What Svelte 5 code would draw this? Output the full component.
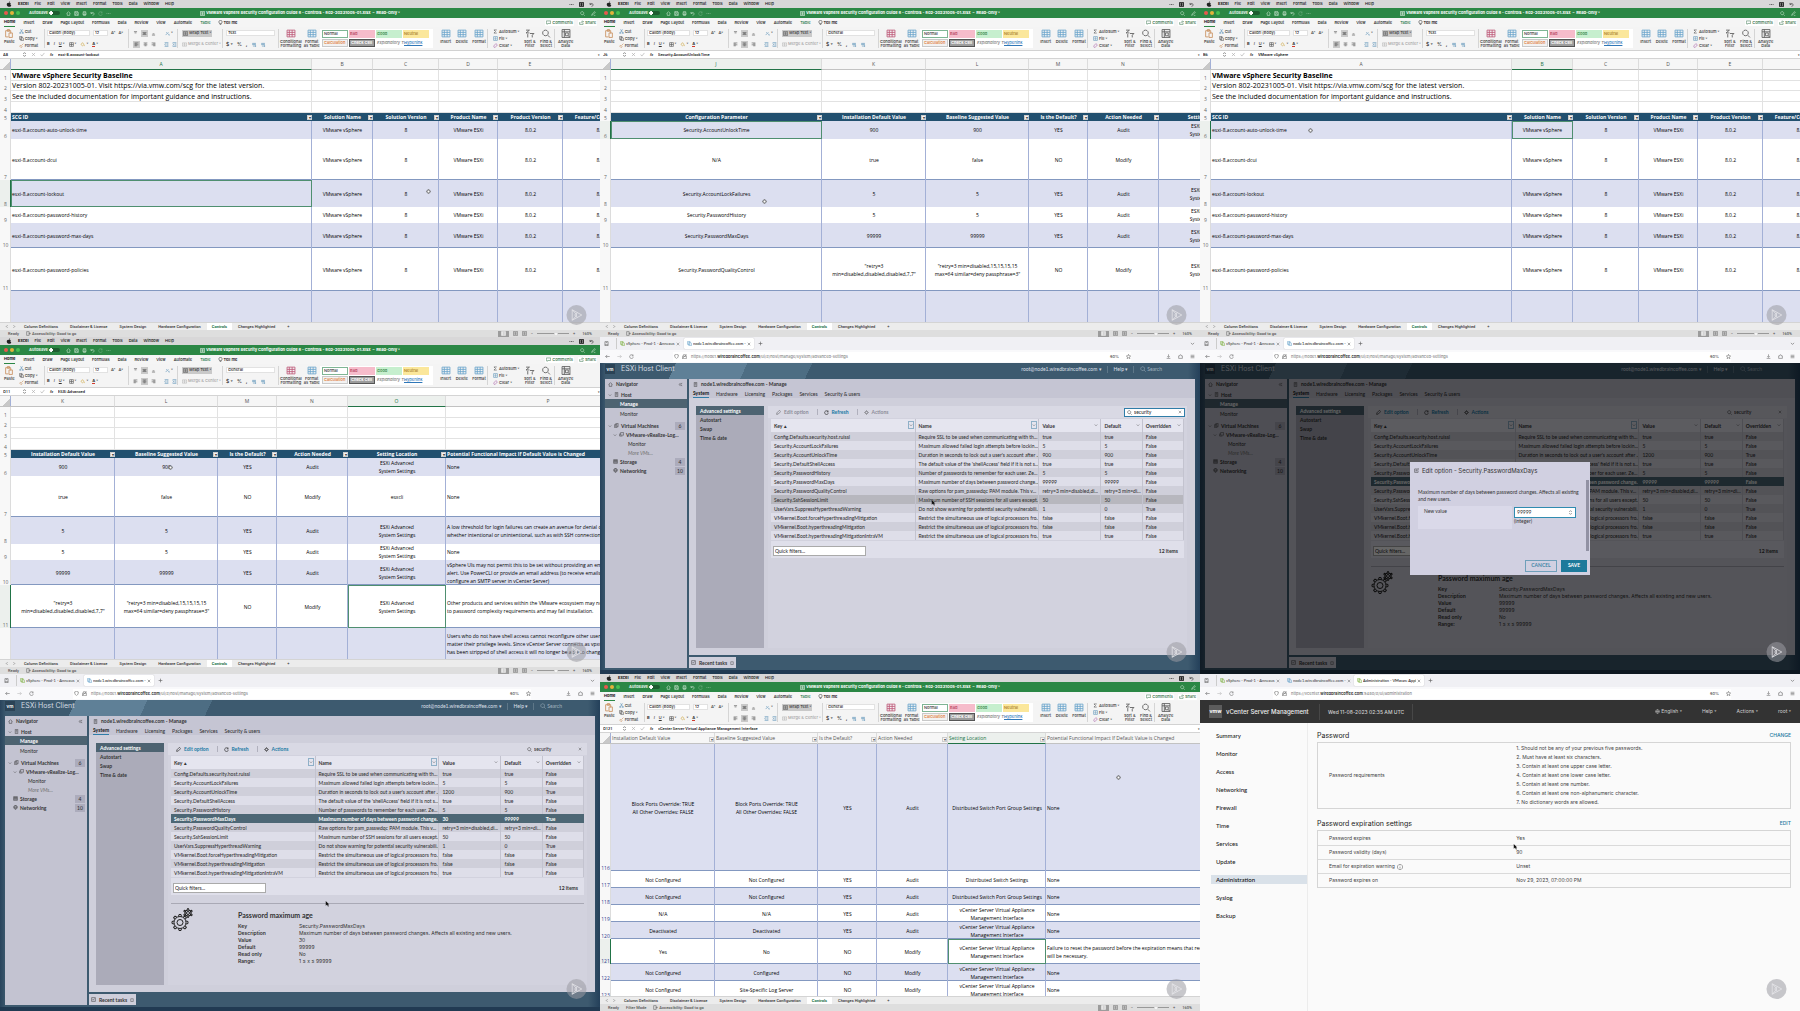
<script>
  const P = {
    home: 'M2 8l6-6 6 6M4 7v7h8V7',
    save: 'M2 2h10l2 2v10H2zM5 2v4h6V2M5 14V9h6v5',
    print: 'M4 6V2h8v4M3 6h10v6H3zM5 10h6v4H5z',
    undo: 'M3 3v5h5M3 8c3-5 10-4 10 1 0 3-2 5-5 5',
    redo: 'M13 5A6 6 0 1 0 14 9M13 2v4H9',
    dots: 'M2 8h2M7 8h2M12 8h2',
    search: 'M7 2a5 5 0 1 0 .1 0M11 11l4 4',
    pen: 'M2 14l2-5 8-7 2 2-8 8zM9 14h5',
    bulb: 'M8 1a5 5 0 0 0-3 9v2h6v-2a5 5 0 0 0-3-9M6 15h4',
    comment: 'M1 3h14v8H7l-3 3v-3H1z',
    share: 'M2 7v7h11V9M6 10c0-4 3-5 8-5M11 2l3 3-3 3',
    scissors: 'M5 1l6 10M11 1L5 11M4 11a2 2 0 1 0 .1 0M12 11a2 2 0 1 0 .1 0',
    copy: 'M2 1h7v10H2zM6 4h5l3 3v8H6z',
    brush: 'M2 10l5 5 3-3-5-5zM8 8l6-6',
    paste: 'M2 3h9v5M2 3v11h5M5 1h4v3H5zM8 7h6v8H8z',
    borders: 'M2 2h12v12H2zM8 2v12M2 8h12',
    bucket: 'M3 8l5-6 5 6-5 4zM14 10v3',
    top: 'M3 2h10M5 6h6',
    mid: 'M2 5h12M4 8h8M2 11h12',
    bottom: 'M5 9h6M3 13h10',
    left: 'M2 3h12M2 6h7M2 9h12M2 12h7',
    center: 'M2 3h12M5 6h6M2 9h12M5 12h6',
    right: 'M2 3h12M7 6h7M2 9h12M7 12h7',
    rotate: 'M2 13L11 4M4 4l4 4M12 9v4h3',
    indentL: 'M2 2h12M8 6h6M8 10h6M2 14h12M6 5L2 8l4 3',
    indentR: 'M2 2h12M8 6h6M8 10h6M2 14h12M2 5l4 3-4 3',
    merge: 'M1 3h14v10H1zM5 8h6M8 3v3M8 10v3',
    decimals: 'M2 4v5h3V4zM8 4v5h3V4zM3 13h9M10 11l3 2-3 2',
    grid: 'M1 2h14v12H1zM1 6h14M1 10h14M5 2v12M10 2v12',
    sigma: 'M12 3H3l5 5-5 5h9',
    fill: 'M2 2h12v12H2zM8 4v6M5 8l3 3 3-3',
    eraser: 'M2 10l7-8 5 4-7 8H4z',
    sort: 'M1 2h6L1 7h6M8 8h7l-3 3v4M4 9v6',
    analyze: 'M1 1h14v14H1zM1 5h14M5 1v14M7 7h5v5H7zM12 12l3 3',
    down: 'M3 6l5 5 5-5',
    leftc: 'M10 3L5 8l5 5',
    rightc: 'M6 3l5 5-5 5',
    x: 'M3 3l10 10M13 3L3 13',
    check: 'M2 8l4 5 8-10',
    plus: 'M8 2v12M2 8h12',
    access: 'M2 2h8v12H2zM12 5v6M9 8h6',
    page: 'M2 1h12v14H2zM5 5h6M5 8h6M5 11h6',
    back: 'M15 8H2M7 3L2 8l5 5',
    fwd: 'M1 8h13M9 3l5 5-5 5',
    shield: 'M8 1l6 2c0 6-2 9-6 12C4 12 2 9 2 3z',
    lock: 'M4 7V5a4 4 0 0 1 8 0v2M2 7h12v8H2zM1 14L15 2',
    star: 'M8 1l2 5 5 .5-4 3.500 1.500 5-4.500-3-4.500 3L5 10 1 6.500 6 6z',
    download: 'M8 1v9M4 7l4 4 4-4M2 14h12',
    ext: 'M2 6h3c0-5 6-5 6 0h3v8H2z',
    menu: 'M2 4h12M2 8h12M2 12h12',
    host: 'M4 1h8v14H4zM6 4h4M6 7h4M7 12h2',
    vms: 'M2 5h7v10H2zM6 5V1h7v11H9M4 8h3M4 11h3',
    vm: 'M5 2h10v8H5zM2 5v8h9',
    storage: 'M2 2h12v3H2zM2 6h12v3H2zM2 10h12v4H2z',
    net: 'M8 1a6 6 0 1 0 .1 0M8 1c-4 3-4 9 0 12 4-3 4-9 0-12M3 7h10M8 13v2',
    dbl: 'M8 3L4 8l4 5M13 3L9 8l4 5',
    pencil: 'M2 14l1-5 8-8 4 4-8 8z',
    cog: 'M8 4a4 4 0 1 0 .1 0M8 1v3M8 12v3M1 8h3M12 8h3M3 3l2 2M11 11l2 2M13 3l-2 2M5 11l-2 2',
    edit: 'M9 3H2v11h11V8M6 10l1-3 6-6 2 2-6 6z',
    task: 'M2 2h12v12H2zM5 8l2 2 4-5',
    box: 'M3 3h10v11H3z',
    globe: 'M8 2a6 6 0 1 0 .1 0M2 8h12M8 2c-3 4-3 8 0 12 3-4 3-8 0-12',
    info: 'M8 1a7 7 0 1 0 .1 0M8 7v5M8 4v1',
    tabs: 'M3 2h10v13H3zM6 5h4M3 12h10',
    spin: 'M4 6l4-4 4 4M4 10l4 4 4-4'
  };

  const menus = ['Excel', 'File', 'Edit', 'View', 'Insert', 'Format', 'Tools', 'Data', 'Window', 'Help'];
  const ribbonTabs = ['Home', 'Insert', 'Draw', 'Page Layout', 'Formulas', 'Data', 'Review', 'View', 'Automate', 'Table'];
  const styles = [['Normal', 'normal'], ['Bad', 'bad'], ['Good', 'good'], ['Neutral', 'neutral'], ['Calculation', 'calc'], ['Check Cell', 'chk'], ['Explanatory T...', 'expl'], ['Hyperlink', 'link']];
  const sheets = ['Column Definitions', 'Disclaimer & License', 'System Design', 'Hardware Configuration', 'Controls', 'Changes Highlighted'];

  const heights = [11, 10, 11, 11, 8, 18, 41, 27, 16, 25, 43, 31];
  const lined = [7, 10, 11];
  const shaded = [6, 8, 10, 12];
  const esx = 'ESXi Advanced\nSystem Settings';

  const idNames = ['auto-unlock-time', 'dcui', 'lockout', 'password-history', 'password-max-days', 'password-policies'];
  const idRows = [
    ...[['VMware vSphere Security Baseline'], ['Version 802-20231005-01. Visit https://via.vmw.com/scg for the latest version.'], ['See the included documentation for important guidance and instructions.'], ['']].map((r) => [...r, '', '', '', '', '']),
    ['SCG ID', 'Solution Name', 'Solution Version', 'Product Name', 'Product Version', 'Feature/Component'],
    ...idNames.map((n) => ['esxi-8.account-' + n, 'VMware vSphere', '8', 'VMware ESXi', '8.0.2', '8.0']),
    ['', '', '', '', '', '']
  ];
  const idCols = [{ l: 'A', w: 0, left: true }, { l: 'B', w: 61 }, { l: 'C', w: 66 }, { l: 'D', w: 59 }, { l: 'E', w: 65 }, { l: '', w: 74 }];

  const q1 = '"retry=3\nmin=disabled,disabled,disabled,7,7"';
  const q2 = '"retry=3 min=disabled,15,15,15,15\nmax=64 similar=deny passphrase=3"';
  const valueRows = [
    ['Installation Default Value', 'Baseline Suggested Value', 'Is the Default?', 'Action Needed', 'Setting Location'],
    ['900', '900', 'YES', 'Audit', esx],
    ['true', 'false', 'NO', 'Modify', 'esxcli'],
    ['5', '5', 'YES', 'Audit', esx],
    ['5', '5', 'YES', 'Audit', esx],
    ['99999', '99999', 'YES', 'Audit', esx],
    [q1, q2, 'NO', 'Modify', esx],
    ['', '', '', '', '']
  ];
  const params = ['Configuration Parameter', 'Security.AccountUnlockTime', 'N/A', 'Security.AccountLockFailures', 'Security.PasswordHistory', 'Security.PasswordMaxDays', 'Security.PasswordQualityControl', ''];
  const impact = [
    'Potential Functional Impact If Default Value is Changed', 'None', 'None',
    'A low threshold for login failures can create an avenue for denial of service,\nwhether intentional or unintentional, such as with SSH connections.',
    'None',
    'vSphere UIs may not permit this to be set without providing an email for the\nalert. Use PowerCLI or provide an email address (to receive emails,\nconfigure an SMTP server in vCenter Server)',
    'Other products and services within the VMware ecosystem may not respond\nto password complexity requirements and may fail installation.',
    'Users who do not have shell access cannot reconfigure other users, no\nmatter their privilege levels. Since vCenter Server connects as vpxuser, which\nhas been stripped of shell access it will no longer be able to change that.'
  ];
  const blanks = (n) => Array.from({ length: 4 }, () => Array(n).fill(''));
  const toRows = (data) => data.map((cells, i) => ({ n: i + 1, h: heights[i], cells, line: lined.includes(i + 1), shade: shaded.includes(i + 1), head: i === 4, plain: i < 4, title: i < 3 }));

  const midCols = [{ l: 'K', w: 104 }, { l: 'L', w: 103 }, { l: 'M', w: 59 }, { l: 'N', w: 71 }];
  const vc = 'vCenter Server Virtual Appliance\nManagement Interface';
  const lateData = [
    [116, 127, 'Block Ports Override: TRUE\nAll Other Overrides: FALSE', 'Block Ports Override: TRUE\nAll Other Overrides: FALSE', 'YES', 'Audit', 'Distributed Switch Port Group Settings', 'None'],
    [117, 17, 'Not Configured', 'Not Configured', 'YES', 'Audit', 'Distributed Switch Settings', 'None'],
    [118, 17, 'Not Configured', 'Not Configured', 'YES', 'Audit', 'Distributed Switch Port Group Settings', 'None'],
    [119, 17, 'N/A', 'N/A', 'YES', 'Audit', vc, 'None'],
    [120, 17, 'Deactivated', 'Deactivated', 'YES', 'Audit', vc, 'None'],
    [121, 25, 'Yes', 'No', 'NO', 'Modify', vc, 'Failure to reset the password before the expiration means that recovery\nwill be necessary.'],
    [122, 17, 'Not Configured', 'Configured', 'NO', 'Modify', vc, 'None'],
    [123, 17, 'Not Configured', 'Site-Specific Log Server', 'NO', 'Modify', vc, 'None']
  ];

  const books = {
    a: { id: 'a', ref: 'A8', text: 'esxi-8.account-lockout', fmt: 'Text', cols: idCols, over: 37, rows: toRows(idRows), sel: [8, 0], cur: ['cross', 71, 56] },
    b: { id: 'b', ref: 'J6', text: 'Security.AccountUnlockTime', fmt: 'General', cols: [{ l: 'J', w: 0 }, ...midCols, { l: '', w: 98 }], over: 57, rows: toRows([...blanks(6), ...valueRows.map((r, i) => [params[i], ...r])]), sel: [6, 0], cur: ['cross', 27, 59] },
    c: { id: 'c', ref: 'B6', text: 'VMware vSphere', fmt: 'Text', cols: idCols, over: 37, rows: toRows(idRows), sel: [6, 1], cur: ['cross', 18, 38] },
    d: { id: 'd', ref: 'O11', text: 'ESXi Advanced', fmt: 'General', cols: [...midCols, { l: 'O', w: 98 }, { l: 'P', w: 0, left: true }], over: 51, rows: toRows([...blanks(6), ...valueRows.map((r, i) => [...r, impact[i]])]), sel: [11, 4], cur: ['cross', 28, 38] },
    e: { id: 'e', ref: 'O121', text: 'vCenter Server Virtual Appliance Management Interface', fmt: 'General', filter: true, cols: [...midCols, { l: 'O', w: 98 }, { l: 'P', w: 0, left: true }].map((c, i) => ({ ...c, l: [...valueRows[0], impact[0]][i] })), over: 51, rows: lateData.map(([n, h, ...cells], i) => ({ n, h, cells, line: true, shade: i % 2 === 0 })), sel: [121, 4], cur: ['cross', 86, 30] }
  };

  const optRows = [
    ['Config.Defaults.security.host.ruissl', 'Require SSL to be used when communicating with th...', 'true', 'true', 'False'],
    ['Security.AccountLockFailures', 'Maximum allowed failed login attempts before lockin...', '5', '5', 'False'],
    ['Security.AccountUnlockTime', "Duration in seconds to lock out a user's account after ...", '900', '900', 'False'],
    ['Security.DefaultShellAccess', "The default value of the 'shellAccess' field if it is not s...", 'true', 'true', 'False'],
    ['Security.PasswordHistory', 'Number of passwords to remember for each user. Ze...', '5', '5', 'False'],
    ['Security.PasswordMaxDays', 'Maximum number of days between password change...', '99999', '99999', 'False'],
    ['Security.PasswordQualityControl', 'Raw options for pam_passwdqc PAM module. This v...', 'retry=3 min=disabled,di...', 'retry=3 min=di...', 'False'],
    ['Security.SshSessionLimit', 'Maximum number of SSH sessions for all users except...', '50', '50', 'False'],
    ['UserVars.SuppressHyperthreadWarning', 'Do not show warning for potential security vulnerabili...', '1', '0', 'True'],
    ['VMkernel.Boot.forceHyperthreadingMitigation', 'Restrict the simultaneous use of logical processors fro...', 'false', 'false', 'False'],
    ['VMkernel.Boot.hyperthreadingMitigation', 'Restrict the simultaneous use of logical processors fro...', 'false', 'false', 'False'],
    ['VMkernel.Boot.hyperthreadingMitigationIntraVM', 'Restrict the simultaneous use of logical processors fro...', 'true', 'true', 'False']
  ];
  const unlocked = optRows.map((r, i) => (i === 2 ? [r[0], r[1], '1200', '900', 'True'] : r));
  const saved = unlocked.map((r, i) => (i === 5 ? [r[0], r[1], '30', '99999', 'True'] : r));
  const hosts = {
    f: { id: 'f', rows: optRows, hover: 7, sel: -1, value: '', focus: true, cur: ['arrow', 55, 48] },
    g: { id: 'g', rows: unlocked, hover: -1, sel: 5, value: '99999', modal: true },
    h: { id: 'h', rows: saved, hover: -1, sel: 5, value: '30', cur: ['arrow', 54, 67] }
  };
  const optCols = ['Key ▴', 'Name', 'Value', 'Default', 'Overridden'];
  const facts = (v) => [['Key', 'Security.PasswordMaxDays'], ['Description', 'Maximum number of days between password changes. Affects all existing and new users.'], ['Value', v], ['Default', '99999'], ['Read only', 'No'], ['Range:', '1 ≤ x ≤ 99999']];

  const vcNav = ['Summary', 'Monitor', 'Access', 'Networking', 'Firewall', 'Time', 'Services', 'Update', 'Administration', 'Syslog', 'Backup'];
  const rules = ['Should not be any of your previous five passwords.', 'Must have at least six characters.', 'Contain at least one upper case letter.', 'Contain at least one lower case letter.', 'Contain at least one number.', 'Contain at least one non-alphanumeric character.', 'No dictionary words are allowed.'];
  const expiry = [['Password expires', 'Yes'], ['Password validity (days)', '90'], ['Email for expiration warning', 'Unset'], ['Password expires on', 'Nov 29, 2023, 07:00:00 PM']];
</script>

{#snippet ic(name, cls = '')}
  <svg class="ic {cls}" viewBox="0 0 16 16" aria-hidden="true"><path d={P[name]} /></svg>
{/snippet}

{#snippet watermark()}
  <svg class="mark" viewBox="0 0 22 22" aria-hidden="true">
    <circle cx="11" cy="11" r="10.500" />
    <path d="M6.500 5.500v11L16.500 11zM6.500 5.500l5 5.500-5 5.500M9 11l3-2.500M9 11l3 2.500" />
  </svg>
{/snippet}

{#snippet pointer(c)}
  {#if c}
    <svg class="pointer" class:small={c[0] === 'cross'} style="left:{c[1]}%;top:{c[2]}%" viewBox="0 0 8 8" aria-hidden="true">
      {#if c[0] === 'cross'}
        <path class="cross" d="M3 1h2v2h2v2H5v2H3V5H1V3h2z" />
      {:else}
        <path class="arrow" d="M2 1v5.500L3.500 5l1 2.500 1-.5-1-2H6z" />
      {/if}
    </svg>
  {/if}
{/snippet}

{#snippet excel(b)}
  <section class="tile excel" aria-label="Workbook view {b.ref}">
    <nav class="macbar" aria-label="System menu">
      <svg class="apple" viewBox="0 0 16 16" aria-hidden="true"><path d="M11 1c0 2-1 3-3 3 0-2 1-3 3-3M8 5c2-1 4-1 5 1-2 1-2 4 1 5-1 3-3 5-6 4-3 1-6-3-6-6s3-6 6-4" /></svg>
      {#each menus as m}<button class:strong={m === 'Excel'}>{m}</button>{/each}
      <span class="push">{@render ic('dots', 'heavy')}{@render ic('page', 'heavy')}{@render ic('undo')}</span>
    </nav>
    <header class="titlebar">
      <div class="quick">
        <i class="dot red"></i><i class="dot amber"></i><i class="dot green"></i>
        <label class="auto">AutoSave <input type="checkbox" role="switch" /></label>
        {@render ic('home')}{@render ic('save')}{@render ic('print')}{@render ic('undo')}{@render ic('redo', 'dim')}{@render ic('dots')}
      </div>
      <h2>{@render ic('page', 'white')}VMware vSphere Security Configuration Guide 8 - Controls - 802-20231005-01.xlsx &nbsp;–&nbsp; Read-Only ˅</h2>
      <div class="quick end">{@render ic('search')}{@render ic('pen')}</div>
    </header>
    <nav class="rtabs" aria-label="Ribbon tabs">
      {#each ribbonTabs as t}<button class:on={t === 'Home'} class:ctx={t === 'Table'}>{t}</button>{/each}
      <button class="tell">{@render ic('bulb')}Tell me</button>
      <span class="push"><button class="pill">{@render ic('comment')}Comments</button><button class="pill">{@render ic('share')}Share</button></span>
    </nav>
    <div class="ribbon">
      <div class="grp paste">
        <button class="big">{@render ic('paste', 'lg orange')}<span>Paste</span></button>
        <div class="stack"><button>{@render ic('scissors', 'blue')}Cut</button><button>{@render ic('copy')}Copy ˅</button><button>{@render ic('brush', 'orange')}Format</button></div>
      </div>
      <div class="grp font two">
        <div><select class="fname" aria-label="Font"><option>Calibri (Body)</option></select><select class="fsize" aria-label="Font size"><option>12</option></select><button>A^</button><button>A˅</button></div>
        <div class="wide"><button><b>B</b></button><button><i>I</i></button><button><u>U</u> ˅</button><button>{@render ic('borders')}˅</button><button>{@render ic('bucket', 'gold')}˅</button><button><b class="fc">A</b> ˅</button></div>
      </div>
      <div class="grp align two">
        <div><button>{@render ic('top')}</button><button class="pressed">{@render ic('mid')}</button><button>{@render ic('bottom')}</button><span class="gap"></span><button>{@render ic('rotate', 'blue')}˅</button></div>
        <div><button class:pressed={b.fmt === 'Text'}>{@render ic('left')}</button><button class:pressed={b.fmt !== 'Text'}>{@render ic('center')}</button><button>{@render ic('right')}</button><span class="gap"></span><button>{@render ic('indentL', 'blue')}</button><button>{@render ic('indentR', 'blue')}</button></div>
      </div>
      <div class="grp wrap two">
        <div><button class="pressed">{@render ic('page')}Wrap Text ˅</button></div>
        <div><button class="faint">{@render ic('merge')}Merge &amp; Center ˅</button></div>
      </div>
      <div class="grp num two">
        <div><select class="nfmt" aria-label="Number format"><option>{b.fmt}</option></select></div>
        <div class="wide"><button class="sym">$ ˅</button><button class="sym">%</button><button class="sym"><b>,</b></button><button>{@render ic('decimals', 'blue')}</button><button>{@render ic('decimals', 'blue')}</button></div>
      </div>
      <div class="grp cond">
        <button class="big">{@render ic('grid', 'lg pink')}<span>Conditional<br />Formatting</span></button>
        <button class="big">{@render ic('grid', 'lg sky')}<span>Format<br />as Table</span></button>
      </div>
      <div class="gallery">{#each styles as [t, k]}<button class={k}>{t}</button>{/each}</div>
      <div class="grp cells">
        <button class="big">{@render ic('grid', 'lg sky')}<span>Insert</span></button>
        <button class="big">{@render ic('grid', 'lg sky')}<span>Delete</span></button>
        <button class="big">{@render ic('grid', 'lg sky')}<span>Format</span></button>
      </div>
      <div class="grp edit">
        <div class="stack"><button>{@render ic('sigma')}AutoSum ˅</button><button>{@render ic('fill', 'blue')}Fill ˅</button><button>{@render ic('eraser', 'violet')}Clear ˅</button></div>
        <button class="big">{@render ic('sort', 'lg')}<span>Sort &amp;<br />Filter</span></button>
        <button class="big">{@render ic('search', 'lg')}<span>Find &amp;<br />Select</span></button>
      </div>
      <div class="grp last"><button class="big">{@render ic('analyze', 'lg')}<span>Analyze<br />Data</span></button></div>
    </div>
    <div class="fbar">
      <input class="ref" aria-label="Name box {b.id}" value={b.ref} />
      {@render ic('spin')}{@render ic('x', 'dim')}{@render ic('check', 'dim')}<i class="fx">fx</i>
      <input class="formula" aria-label="Formula {b.id}" value={b.text} />
      <span class="tri">▾</span>
    </div>
    <div class="sheet">
      <table style="width:calc(100% + {b.over}px)">
        <colgroup><col class="gut" />{#each b.cols as c}{#if c.w}<col style="width:{c.w}px" />{:else}<col />{/if}{/each}</colgroup>
        <thead>
          <tr><td class="corner"></td>{#each b.cols as c, j}<th scope="col" class:on={j === b.sel[1]} class:named={b.filter}>{c.l}{#if b.filter && j < 5}<button class="filter" aria-label="Filter {c.l}">▾</button>{/if}</th>{/each}</tr>
        </thead>
        <tbody>
          {#each b.rows as r}
            <tr style="height:{r.h}px" class:shade={r.shade} class:plain={r.plain} class:title={r.title} class:head={r.head} class:line={r.line} class:first={r.n === 1}>
              <th scope="row" class:on={r.n === b.sel[0]} class:ink={b.filter}>{r.n === 12 ? '' : r.n}</th>
              {#each r.cells as c, j}
                <td class:left={b.cols[j].left} class:sel={r.n === b.sel[0] && j === b.sel[1]}>{c}{#if r.head && j < 5 && c}<button class="filter" aria-label="Filter {c}">▾</button>{/if}</td>
              {/each}
            </tr>
          {/each}
        </tbody>
      </table>
    </div>
    <nav class="sheets" aria-label="Sheets">
      <span class="arrows">{@render ic('leftc')}{@render ic('rightc')}</span>
      {#each sheets as s}<button class:on={s === 'Controls'}>{s}</button>{/each}<button aria-label="Add sheet">+</button>
    </nav>
    <footer class="status">
      <span>Ready</span>{#if b.filter}<span>Filter Mode</span>{/if}<span>{@render ic('access')}Accessibility: Good to go</span>
      <span class="push views"><button class="pressed" aria-label="Normal view">{@render ic('grid', 'white')}</button>{@render ic('page')}{@render ic('page')}<span>−</span><input type="range" aria-label="Zoom {b.id}" value="60" /><span>+</span><span class="pct">160%</span></span>
    </footer>
    {@render pointer(b.cur)}
    {@render watermark()}
  </section>
{/snippet}

{#snippet browser(tab, pre, domain, path)}
  <div class="tabbar">
    {@render ic('tabs')}
    <button class="tab wide1">{@render ic('copy', 'leaf')}<span>vSphere - Prod-1 - Annexus</span>{@render ic('x', 'xs')}</button>
    <button class="tab" class:active={tab === 1}>{@render ic('copy', 'sky')}<span>node1.wiredbraincoffee.com -</span>{@render ic('x', 'xs')}</button>
    {#if tab === 2}<button class="tab active">{@render ic('copy', 'leaf')}<span>Administration - VMware Appl</span>{@render ic('x', 'xs')}</button>{/if}
    <button class="plus" aria-label="New tab">{@render ic('plus')}</button>
    <span class="push">{@render ic('down')}</span>
  </div>
  <div class="urlbar">
    <span class="navi">{@render ic('back')}{@render ic('fwd', 'dim')}{@render ic('redo')}</span>
    <div class="address">{@render ic('shield')}{@render ic('lock')}<span class="url">{pre}<b>{domain}</b>{path}</span><span class="zoom">60%</span>{@render ic('star')}</div>
    <span class="navi tail">{@render ic('download')}{@render ic('ext')}{@render ic('menu')}</span>
  </div>
{/snippet}

{#snippet esxi(h)}
  <section class="tile esxi" aria-label="Host client {h.id}">
    {@render browser(1, 'https://node1.', 'wiredbraincoffee.com', '/ui/#/host/manage/system/advanced-settings')}
    <div class="app">
      <header class="apphead">
        <span class="logo">vm</span><h2>ESXi Host Client</h2>
        <span class="push"><button>root@node1.wiredbraincoffee.com ▾</button><button class="bar">Help ▾</button><button class="bar find">{@render ic('search')}Search</button></span>
      </header>
      <div class="body">
        <nav class="navigator" aria-label="Navigator {h.id}">
          <h3>{@render ic('home')}Navigator<span class="push">{@render ic('dbl')}</span></h3>
          <a href="#host" class="n1">{@render ic('down', 'xs')}{@render ic('host')}<b>Host</b></a>
          <a href="#manage" class="n2 on">Manage</a>
          <a href="#monitor" class="n2 tall">Monitor</a>
          <a href="#vms" class="n1 sep">{@render ic('down', 'xs')}{@render ic('vms')}<b>Virtual Machines</b><em>6</em></a>
          <a href="#vrli" class="n1 deep">{@render ic('down', 'xs')}{@render ic('vm')}<b>VMware-vRealize-Log...</b></a>
          <a href="#vmmon" class="n3">Monitor</a>
          <a href="#more" class="n3 it">More VMs...</a>
          <a href="#storage" class="n1 solo">{@render ic('storage')}<b>Storage</b><em>4</em></a>
          <a href="#net" class="n1 solo">{@render ic('net')}<b>Networking</b><em>10</em></a>
        </nav>
        <div class="right">
          <main class="panel">
            <h3>{@render ic('host')}node1.wiredbraincoffee.com - Manage</h3>
            <nav class="ptabs" aria-label="Manage {h.id}">{#each ['System', 'Hardware', 'Licensing', 'Packages', 'Services', 'Security & users'] as t}<button class:on={t === 'System'}>{t}</button>{/each}</nav>
            <div class="split">
              <nav class="side" aria-label="System {h.id}">{#each ['Advanced settings', 'Autostart', 'Swap', 'Time & date'] as t, i}<button class:on={i === 0}>{t}</button>{/each}</nav>
              <div class="content">
                <div class="tools">
                  <button class:off={h.sel < 0}>{@render ic('pencil', 'dark')}Edit option</button>
                  <button class="bar">{@render ic('redo', 'dark')}Refresh</button>
                  <button class="bar" class:off={h.sel < 0}>{@render ic('cog', 'dark')}Actions</button>
                  <label class="searchbox" class:focus={h.focus}>{@render ic('search')}<input aria-label="Search settings {h.id}" value="security" />{@render ic('x', 'xs')}</label>
                </div>
                <table class="opts">
                  <colgroup><col class="k" /><col class="nm" /><col class="v" /><col class="df" /><col class="ov" /></colgroup>
                  <thead><tr>{#each optCols as c, i}<th scope="col">{c}<button class="colbtn" class:boxed={i < 2} aria-label="Filter {c}">{@render ic('down', 'xs')}</button></th>{/each}</tr></thead>
                  <tbody>
                    {#each h.rows as r, i}
                      <tr class:hover={i === h.hover} class:picked={i === h.sel}>{#each r as c}<td>{c}</td>{/each}</tr>
                    {/each}
                  </tbody>
                </table>
                <div class="foot"><select aria-label="Quick filters {h.id}"><option>Quick filters...</option></select><span>12 items</span></div>
                {#if h.sel >= 0}
                  <div class="detail">
                    <svg class="gears" viewBox="0 0 42 46" aria-hidden="true">
                      <g transform="translate(17 29)"><circle r="6" /><circle r="12" />{#each [0, 45, 90, 135, 180, 225, 270, 315] as a}<path d="M-3-12l1-4h4l1 4" transform="rotate({a})" />{/each}</g>
                      <g transform="translate(33 10)"><circle r="3" /><circle r="6" />{#each [0, 60, 120, 180, 240, 300] as a}<path d="M-2-6l1-3h2l1 3" transform="rotate({a})" />{/each}</g>
                    </svg>
                    <div>
                      <h4>Password maximum age</h4>
                      <dl>{#each facts(h.value) as [k, v]}<dt>{k}</dt><dd>{v}</dd>{/each}</dl>
                    </div>
                  </div>
                {/if}
              </div>
            </div>
          </main>
          <button class="recent">{@render ic('task')}Recent tasks {@render ic('box', 'xs')}</button>
        </div>
      </div>
      {#if h.modal}
        <div class="shadeover"></div>
      {/if}
    </div>
    {#if h.modal}
      <div class="modal" role="dialog" aria-label="Edit option">
        <h3>{@render ic('edit')}Edit option - Security.PasswordMaxDays</h3>
        <p>Maximum number of days between password changes. Affects all existing<br />and new users.</p>
        <div class="field">
          <label for="nv">New value</label>
          <div><span class="numbox"><input id="nv" value="99999" />{@render ic('spin')}</span><small>(integer)</small></div>
        </div>
        <div class="acts"><button class="ghost">CANCEL</button><button class="solid">SAVE</button></div>
        <i class="scroll"></i>
      </div>
    {/if}
    {@render pointer(h.cur)}
    {@render watermark()}
  </section>
{/snippet}

<div class="board">
  {@render excel(books.a)}
  {@render excel(books.b)}
  {@render excel(books.c)}
  {@render excel(books.d)}
  {@render esxi(hosts.f)}
  {@render esxi(hosts.g)}
  {@render esxi(hosts.h)}
  {@render excel(books.e)}
  <section class="tile vcenter" aria-label="vCenter Server Management">
    {@render browser(2, 'https://vcenter.', 'wiredbraincoffee.com', ':5480/#/ui/administration')}
    <header class="vhead">
      <span class="vlogo">vmw</span><h2>vCenter Server Management</h2><time>Wed 11-08-2023 02:35 AM UTC</time>
      <span class="push"><button>{@render ic('globe')}English ˅</button><button>Help ˅</button><button>Actions ˅</button><button>root ˅</button></span>
    </header>
    <div class="vbody">
      <nav aria-label="Appliance">{#each vcNav as n}<a href="#{n}" class:on={n === 'Administration'}>{n}</a>{/each}</nav>
      <main>
        <div class="vh"><h3>Password</h3><button>CHANGE</button></div>
        <table class="reqs"><tbody><tr><th scope="row">Password requirements</th><td><ol>{#each rules as r, i}<li>{i + 1}. {r}</li>{/each}</ol></td></tr></tbody></table>
        <div class="vh second"><h3>Password expiration settings</h3><button>EDIT</button></div>
        <table class="exp"><tbody>{#each expiry as [k, v]}<tr><th scope="row"><span>{k}{#if v === 'Unset'}{@render ic('info', 'mid')}{/if}</span></th><td>{v}</td></tr>{/each}</tbody></table>
      </main>
    </div>
    {@render pointer(['arrow', 52, 50])}
    {@render watermark()}
  </section>
</div>

<style>
  :global(body) { margin: 0; background: #fff; }
  .board { display: grid; grid-template-columns: repeat(3, minmax(0, 1fr)); grid-template-rows: repeat(3, minmax(0, 1fr)); height: 100vh; overflow: hidden; }
  .board :global(*) { box-sizing: border-box; }
  .tile { position: relative; display: flex; flex-direction: column; min-width: 0; min-height: 0; overflow: hidden; font: 500 4px/6px Inter, sans-serif; color: #111; white-space: nowrap; }
  button, input, select { font: inherit; color: inherit; background: none; border: 0; padding: 0; margin: 0; border-radius: 0; min-width: 0; appearance: none; outline: 0; }
  button { display: inline-flex; align-items: center; justify-content: center; gap: 1px; white-space: nowrap; }
  h2, h3, h4, p, dl, dd, ol { margin: 0; padding: 0; font-weight: 400; font-size: inherit; }
  a { color: inherit; text-decoration: none; }
  .ic { width: 5px; height: 5px; flex: none; fill: none; stroke: currentColor; stroke-width: 2; opacity: .8; }
  .ic.xs { width: 4px; height: 4px; }
  .ic.mid { width: 6px; height: 6px; stroke-width: 1.500; }
  .ic.lg { width: 10px; height: 9px; stroke-width: 1.500; }
  .ic.heavy { stroke-width: 3; opacity: 1; }
  .ic.dim { opacity: .35; }
  .ic.white { color: #fff; opacity: 1; }
  .ic.orange { color: #c07a3c; }
  .ic.blue { color: #3b7fae; }
  .ic.gold { color: #c9981b; }
  .ic.pink { color: #b2355c; }
  .ic.sky { color: #4a92c2; }
  .ic.violet { color: #a04ba0; }
  .ic.leaf { color: #6aa522; }
  .push { margin-left: auto; display: flex; align-items: center; }
  .mark { position: absolute; right: 13px; bottom: 11px; width: 21px; height: 22px; }
  .mark circle { fill: #9a9aa2; opacity: .55; }
  .mark path { fill: none; stroke: #e6e6ea; stroke-width: 1; opacity: .8; }
  .pointer { position: absolute; width: 7px; height: 7px; }
  .pointer.small { width: 5px; height: 5px; }
  .cross { fill: #fff; stroke: #555; stroke-width: 1; }
  .arrow { fill: #111; }

  .macbar { display: flex; align-items: center; gap: 6px; height: 8px; flex: none; padding: 0 6px; background: #d8d7d8; color: #111; }
  .macbar .strong { font-weight: 700; }
  .macbar .push { gap: 5px; }
  .apple { width: 6px; height: 6px; fill: #222; }
  .titlebar { display: grid; grid-template-columns: 1fr auto 1fr; align-items: center; height: 10px; flex: none; padding: 0 4px; background: #2b8745; color: #fff; }
  .titlebar h2 { display: flex; align-items: center; gap: 1px; font-weight: 700; color: #fff; }
  .quick { display: flex; align-items: center; gap: 3px; color: #e2f2e5; }
  .quick.end { justify-content: flex-end; gap: 6px; }
  .dot { width: 4px; height: 4px; border-radius: 50%; flex: none; }
  .quick .dot { margin-right: -1px; }
  .quick .dot + .dot { margin-left: 0; }
  .red { background: #e8584d; }
  .amber { background: #e3b13c; }
  .green { background: #45c052; }
  .auto { display: flex; align-items: center; gap: 1px; margin: 0 3px 0 7px; font-weight: 700; }
  .auto input { width: 11px; height: 4px; border-radius: 2px; background: radial-gradient(circle at 2px 2px, #fff 2px, #1d5c30 2px); }
  .rtabs { display: flex; align-items: stretch; gap: 8px; height: 9px; flex: none; padding: 0 3px 0 4px; background: #f5f5f5; }
  .rtabs > button.on { font-weight: 700; border-bottom: 1px solid #2b8745; }
  .rtabs > button.ctx { color: #217346; }
  .rtabs .tell { margin-left: -1px; font-weight: 600; }
  .rtabs .push { gap: 4px; }
  .pill { height: 6px; padding: 0 1px; background: #fff; color: #2c6b42; border-radius: 1px; }
  .ribbon { display: flex; align-items: center; height: 24px; flex: none; background: #f4f4f4; border-bottom: 1px solid #d2d2d2; color: #333; line-height: 4px; overflow: hidden; }
  .grp { display: flex; align-items: flex-start; height: 19px; flex: none; border-right: 1px solid #d5d5d5; }
  .grp.two { flex-direction: column; justify-content: space-between; }
  .grp.two > div { display: flex; align-items: center; gap: 3px; height: 8px; width: 100%; }
  .grp.two > .wide { gap: 4px; }
  .paste { width: 45px; padding-left: 4px; gap: 4px; }
  .font { width: 84px; padding-left: 2px; }
  .align { width: 49px; padding-left: 4px; }
  .wrap { width: 45px; padding-left: 4px; }
  .num { width: 56px; padding-left: 3px; }
  .cond { width: 41px; padding-left: 1px; border: 0; gap: 2px; }
  .cells { width: 53px; padding-left: 4px; gap: 2px; justify-content: space-around; }
  .edit { width: 67px; padding-left: 5px; gap: 2px; justify-content: space-between; padding-right: 2px; }
  .last { padding-left: 3px; border: 0; }
  .stack { display: flex; flex-direction: column; justify-content: space-between; align-items: flex-start; height: 19px; }
  .big { flex-direction: column; justify-content: flex-start; gap: 2px; }
  .gap { width: 3px; }
  .grp.two .pressed { background: #c9c9c9; padding: 1px; }
  .faint { color: #a5a5a5; }
  .sym { font-size: 5px; }
  .fc { border-bottom: 1px solid #d23b2e; }
  .fname, .fsize, .nfmt { height: 6px; padding-left: 1px; background: #fff; border: 1px solid #e2e2e2; line-height: 4px; color: #222; }
  .fname { width: 43px; }
  .fsize { width: 15px; }
  .nfmt { width: 49px; }
  .gallery { display: grid; grid-template-columns: repeat(4, 26px); grid-auto-rows: 8px; gap: 1px; flex: none; padding: 1px 4px 1px 2px; background: #fff; margin-right: 2px; }
  .gallery button { justify-content: flex-start; padding-left: 1px; height: 8px; }
  .gallery .normal { border: 1px solid #7fb594; }
  .gallery .bad { background: #f6bccb; color: #b03a55; }
  .gallery .good { background: #c6efce; color: #2e7d3c; }
  .gallery .neutral { background: #fbe79b; color: #a37b1c; }
  .gallery .calc { background: #f2f2f2; color: #e0752c; border: 1px solid #c9c9c9; }
  .gallery .chk { background: #9c9c9c; color: #fff; font-weight: 700; border: 1px solid #555; }
  .gallery .expl { color: #777; font-style: italic; }
  .gallery .link { color: #2f77b8; text-decoration: underline; }
  .fbar { display: flex; align-items: center; gap: 4px; height: 8px; flex: none; background: #fff; border-bottom: 1px solid #d4d4d4; font-family: Roboto, sans-serif; }
  .ref { width: 18px; height: 7px; padding-left: 3px; }
  .formula { flex: 1; height: 7px; color: #111; }
  .fx { width: 4px; margin-left: 1px; }
  .tri { font-size: 3px; }

  .sheet { flex: 1 1 0; min-height: 0; overflow: hidden; background: #fff; font: 500 5px/8px "Open Sans", sans-serif; color: #000; }
  .sheet table { table-layout: fixed; border-collapse: separate; border-spacing: 0; }
  .gut { width: 11px; }
  .sheet th, .sheet td { padding: 0; text-align: center; font-weight: 500; overflow: hidden; white-space: pre; position: relative; }
  .sheet thead th { height: 11px; color: #555; background: #f6f6f6; border-right: 1px solid #dcdcdc; border-bottom: 1px solid #c2c2c2; line-height: 8px; }
  .sheet thead th.on { background: #ecf0ed; color: #217346; border-bottom-color: #217346; }
  .sheet thead th.named { text-align: left; padding-left: 1px; }
  .corner { background: linear-gradient(135deg, #f6f6f6 60%, #c8c8c8 60%); border-bottom: 1px solid #c2c2c2; }
  .sheet tbody th { vertical-align: bottom; color: #666; background: #f8f8f8; line-height: 6px; font-size: 5px; box-shadow: inset -1px 0 #dcdcdc; overflow: visible; }
  .sheet tbody th.ink { color: #2d3a8c; }
  .sheet tbody th.on { box-shadow: inset -1px 0 #217346; background: #ecf0ed; }
  .sheet td { vertical-align: middle; box-shadow: inset -1px 0 #a3b0d6; }
  .sheet td.left { text-align: left; padding-left: 1px; }
  .shade td { background: #dcdff0; }
  .line td { box-shadow: inset -1px 0 #a3b0d6, inset 0 -1px #8398c0; }
  .plain td { box-shadow: inset -1px 0 #e2e2e2, inset 0 -1px #e2e2e2; }
  .title td { font-size: 7px; line-height: 10px; }
  .sheet .first td { font-weight: 700; }
  .sheet .head td { background: #22506f; color: #fff; font-weight: 700; box-shadow: none; line-height: 8px; }
  .sheet td.sel { box-shadow: inset 0 0 0 1px #4f8f70; }
  .filter { position: absolute; right: 0; bottom: 1px; width: 5px; height: 5px; background: #f4f4f4; color: #444; border: 1px solid #ccc; font-size: 4px; line-height: 3px; }

  .sheets { display: flex; align-items: stretch; gap: 12px; height: 8px; flex: none; padding-left: 5px; background: #ececec; border-top: 1px solid #d4d4d4; color: #333; font-family: Roboto, sans-serif; }
  .sheets .arrows { display: flex; align-items: center; gap: 3px; margin-right: -4px; }
  .sheets .arrows .ic { width: 4px; }
  .sheets .on { background: #fff; color: #217346; font-weight: 700; padding: 0 5px; margin: 0 -6px; }
  .status { display: flex; align-items: center; gap: 7px; height: 7px; flex: none; padding: 0 8px; background: #dedede; color: #555; font-family: Roboto, sans-serif; }
  .status span { display: inline-flex; align-items: center; gap: 1px; }
  .status .views { gap: 4px; }
  .views .pressed { width: 11px; height: 6px; background: #9c9c9c; }
  .views input { width: 32px; height: 4px; background: linear-gradient(#999, #999) center / 100% 1px no-repeat; }
  .views input::-webkit-slider-thumb { appearance: none; width: 4px; height: 4px; border-radius: 50%; background: #fff; border: 1px solid #ddd; }
  .status .pct { margin-left: 3px; }

  .tabbar { display: flex; align-items: center; height: 13px; flex: none; padding: 0 5px 0 4px; background: #f0f0f4; color: #444; }
  .tab { height: 11px; gap: 1px; padding: 0 3px; justify-content: flex-start; width: 70px; font-family: Lato, sans-serif; }
  .tab span { flex: 1; text-align: left; overflow: hidden; }
  .wide1 { width: 67px; margin-left: 7px; border-left: 1px solid #ccc; margin-right: 1px; }
  .tab.active { background: #fff; color: #222; box-shadow: 0 0 1px #999; border-radius: 1px; }
  .plus { margin-left: 4px; }
  .urlbar { display: flex; align-items: center; height: 13px; flex: none; padding: 0 5px; background: #f9f9fb; color: #555; }
  .navi { display: flex; gap: 7px; width: 68px; }
  .navi.tail { justify-content: flex-end; width: 64px; }
  .address { display: flex; align-items: center; gap: 3px; flex: 1; height: 10px; padding-left: 1px; background: #fff; }
  .url { flex: 1; padding-left: 1px; color: #888; }
  .url b { color: #222; font-weight: 600; }
  .zoom { margin-right: 4px; }

  .app { position: relative; display: flex; flex-direction: column; flex: 1 1 0; min-height: 0; background: linear-gradient(90deg, #29445c, #3d5a6f 1%, #3d5a6f 98%, #24405a); border-bottom: 4px solid #213a52; font: 500 5px/8px Lato, sans-serif; color: #333; }
  .apphead { display: flex; align-items: center; height: 16px; flex: none; padding: 0 38px 4px 5px; color: #d3dbe2; background: linear-gradient(115deg, transparent 34%, #5f8097 34%, #5f8097 66%, #4d6d83 66%, #4d6d83 95%, transparent 95%) 0 0 / 36% 100% no-repeat; }
  .apphead h2 { font: 7px/10px Inter, sans-serif; margin-left: 6px; }
  .apphead .push { gap: 5px; }
  .apphead .bar { padding-left: 6px; border-left: 1px solid #5e7788; line-height: 7px; }
  .apphead .find { color: #9fb0bd; }
  .apphead .find .ic { width: 6px; height: 6px; }
  .logo { display: grid; place-items: center; width: 10px; height: 10px; background: #2b4356; color: #fff; font-weight: 700; }
  .body { display: flex; flex: 1 1 0; min-height: 0; padding: 0 5px 2px; gap: 2px; }
  .navigator { width: 82px; flex: none; background: #c3c3d1; display: flex; flex-direction: column; }
  .navigator h3 { display: flex; align-items: center; gap: 3px; height: 10px; padding: 0 4px 0 3px; font-weight: 700; margin-bottom: 1px; }
  .navigator a { display: flex; align-items: center; height: 9px; gap: 2px; flex: none; }
  .n1 { padding-left: 3px; }
  .n2 { padding-left: 15px; }
  .n3 { padding-left: 23px; }
  .n1.deep { padding-left: 8px; }
  .n1.solo { padding-left: 8px; }
  .navigator .on { background: #4d6371; color: #fff; font-weight: 700; }
  .navigator .tall { height: 11px; }
  .navigator .sep { margin-top: 2px; }
  .navigator .it { font-style: italic; color: #777; }
  .navigator em { margin-left: auto; margin-right: 2px; width: 10px; height: 8px; background: #acacbc; font-style: normal; text-align: center; }
  .right { display: flex; flex-direction: column; flex: 1; min-width: 0; align-items: flex-start; }
  .panel { display: flex; flex-direction: column; flex: 1 1 0; align-self: stretch; min-height: 0; background: #c5c5d3; }
  .panel h3 { display: flex; align-items: center; gap: 3px; height: 10px; padding-left: 4px; font-weight: 700; flex: none; }
  .ptabs { display: flex; gap: 7px; height: 9px; padding-left: 4px; flex: none; }
  .ptabs button { height: 9px; color: #333; }
  .ptabs .on { color: #111; border-bottom: 1px solid #2f7da8; font-weight: 700; }
  .split { display: flex; gap: 4px; flex: 1 1 0; min-height: 0; padding: 8px 8px 7px 7px; background: #cfcfdb; }
  .side { display: flex; flex-direction: column; width: 68px; flex: none; background: #ababb9; }
  .side button { height: 9px; justify-content: flex-start; padding-left: 4px; font-weight: 700; }
  .side .on { background: #4d6371; color: #fff; }
  .content { flex: 1; min-width: 0; background: #d2d2de; display: flex; flex-direction: column; padding: 0 3px; }
  .tools { display: flex; align-items: center; height: 12px; gap: 8px; padding: 0 1px 0 8px; background: #d9d9e4; color: #2079a4; font-weight: 700; margin: 0 -3px; flex: none; }
  .tools button { gap: 3px; }
  .tools .bar { border-left: 1px solid #b0b0bd; padding-left: 6px; line-height: 6px; }
  .tools .off { color: #8b8b98; }
  .ic.dark { color: #222; opacity: 1; }
  .off .ic.dark { opacity: .6; }
  .searchbox { margin-left: auto; display: flex; align-items: center; gap: 2px; width: 61px; height: 9px; padding: 0 2px; color: #333; font-weight: 500; border: 1px solid transparent; margin-right: 1px; }
  .searchbox input { flex: 1; width: 20px; }
  .searchbox.focus { background: #fff; border-color: #2f7da8; }
  .opts { table-layout: fixed; width: 100%; border-collapse: separate; border-spacing: 0; flex: none; margin-top: 1px; }
  .k { width: 35%; }
  .nm { width: 30%; }
  .v { width: 15%; }
  .df { width: 10%; }
  .ov { width: 10%; }
  .opts th, .opts td { padding: 0 0 0 3px; text-align: left; height: 9px; overflow: hidden; border-right: 1px solid #c3c3cf; line-height: 8px; color: #333; }
  .opts th { height: 13px; font-weight: 700; background: #e5e5ef; position: relative; }
  .opts tbody tr { background: #dedee9; }
  .opts tbody tr:nth-child(odd) { background: #cfcfda; }
  .opts tbody tr.hover { background: #b7b7be; }
  .opts tbody tr.picked { background: #4d6775; }
  .opts .picked td { color: #fff; font-weight: 700; border-color: #4d6775; }
  .colbtn { position: absolute; right: 1px; top: 2px; width: 6px; height: 8px; }
  .boxed { border: 1px solid #8fb0c8; }
  .foot { display: flex; align-items: center; justify-content: space-between; height: 17px; margin-top: 1px; padding: 2px 6px 0 2px; background: #dfdfea; flex: none; }
  .foot select { width: 93px; height: 10px; padding-left: 1px; background: #fff; border: 1px solid #aaa; }
  .foot span { font-weight: 700; }
  .detail { display: flex; gap: 45px; margin-top: 8px; padding-top: 4px; border-top: 1px solid #a9a9b5; font: 500 5px/7px Inter, sans-serif; }
  .gears { width: 22px; height: 23px; fill: none; stroke: #222; stroke-width: 2; }
  .detail h4 { font: 700 7px/9px Lato, sans-serif; margin: 3px 0 3px; }
  .detail dl { display: grid; grid-template-columns: 61px auto; font-weight: 400; }
  .detail dt { font-weight: 600; }
  .recent { height: 11px; flex: none; margin-top: 2px; padding: 0 2px; gap: 3px; background: #cfcfdb; font-weight: 700; }
  .shadeover { position: absolute; inset: 0 0 -4px; background: rgba(0, 0, 0, .6); }
  .modal { position: absolute; left: 35%; top: 37%; width: 30%; height: 113px; display: flex; flex-direction: column; padding: 4px 15px 3px 8px; background: #d1d0e1; font: 5px/7px Lato, sans-serif; color: #333; }
  .modal h3 { display: flex; align-items: center; gap: 3px; margin-left: -4px; font: 6px/9px Inter, sans-serif; margin-bottom: 14px; }
  .modal p { margin-right: -15px; }
  .field { display: grid; grid-template-columns: 94px 62px; gap: 2px; margin-top: 3px; }
  .field label { height: 23px; padding: 2px 6px; background: #dad9e9; }
  .numbox { display: flex; align-items: center; height: 11px; margin-top: 1px; padding: 0 2px; background: #fff; border: 1px solid #2f8bb0; }
  .numbox input { flex: 1; width: 20px; }
  .field small { font-size: 5px; line-height: 6px; display: block; }
  .acts { display: flex; gap: 4px; justify-content: flex-end; margin: auto -12px 0 0; }
  .acts button { height: 12px; font-weight: 700; }
  .ghost { width: 32px; border: 1px solid #6f9fba; color: #4486a8; }
  .solid { width: 26px; background: #1d7a9b; color: #fff; }
  .scroll { position: absolute; right: 1px; top: 18px; width: 3px; height: 71px; background: #9292a4; }

  .vcenter { background: #fafafa; font: 5px/9px Inter, sans-serif; color: #444; }
  .vcenter .tabbar, .vcenter .urlbar { font-size: 4px; font-weight: 500; }
  .vhead { display: flex; align-items: center; height: 23px; flex: none; padding: 0 9px; background: #333; color: #cfcfcf; }
  .vlogo { display: grid; place-items: center; width: 13px; height: 13px; background: #5c5c5c; color: #fff; font-weight: 700; }
  .vhead h2 { font-size: 6px; font-weight: 500; color: #f0f0f0; padding-left: 4px; width: 97px; }
  .vhead time { border: solid #474747; border-width: 0 1px; padding: 0 8px; line-height: 16px; font-weight: 500; }
  .vhead .push { gap: 20px; }
  .vbody { display: flex; flex: 1; }
  .vbody nav { display: flex; flex-direction: column; gap: 9px; width: 108px; flex: none; padding: 8px 0 0 11px; border-right: 1px solid #ececec; font: 500 6px/9px Lato, sans-serif; color: #222; }
  .vbody nav a { padding-left: 5px; height: 9px; }
  .vbody nav .on { background: #d9e1e9; color: #111; }
  .vbody main { flex: 1; padding: 6px 9px 0; }
  .vh { display: flex; justify-content: space-between; align-items: center; height: 13px; }
  .vh h3 { font-size: 7px; color: #222; }
  .vh button { color: #2277a0; font-weight: 500; }
  .second { margin-top: 8px; }
  .vbody table { width: 100%; table-layout: fixed; border: 1px solid #d5d5d5; border-spacing: 0; border-collapse: separate; }
  .vbody th { width: 42%; padding: 0 0 0 11px; text-align: left; font-weight: 400; }
  .vbody th span { display: flex; align-items: center; gap: 2px; }
  .vbody td { padding: 0; }
  .reqs td { padding: 1px 0 1px; }
  ol { list-style: none; }
  .exp th, .exp td { height: 14px; }
  .exp tr + tr th, .exp tr + tr td { border-top: 1px solid #dadada; }
</style>
